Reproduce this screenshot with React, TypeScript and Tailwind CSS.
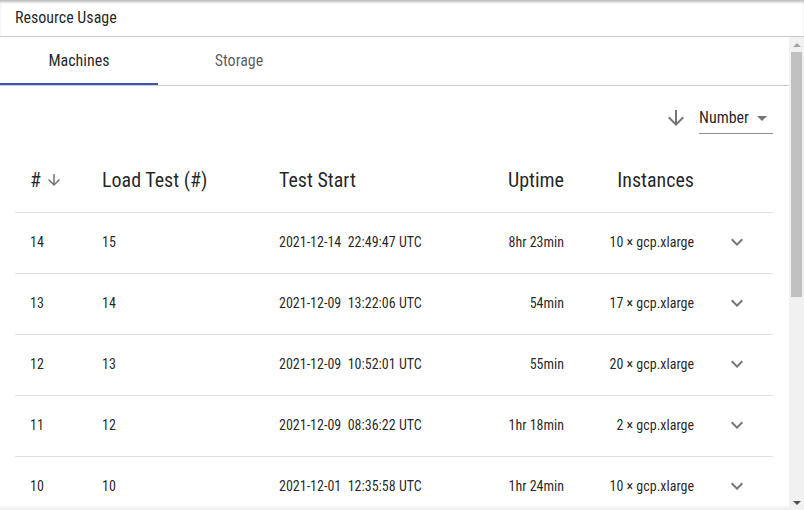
const rows = [
  { n: "14", lt: "15", d: "2021-12-14", t: "22:49:47", up: "8hr 23min", inst: "10 × gcp.xlarge" },
  { n: "13", lt: "14", d: "2021-12-09", t: "13:22:06", up: "54min", inst: "17 × gcp.xlarge" },
  { n: "12", lt: "13", d: "2021-12-09", t: "10:52:01", up: "55min", inst: "20 × gcp.xlarge" },
  { n: "11", lt: "12", d: "2021-12-09", t: "08:36:22", up: "1hr 18min", inst: "2 × gcp.xlarge" },
  { n: "10", lt: "10", d: "2021-12-01", t: "12:35:58", up: "1hr 24min", inst: "10 × gcp.xlarge" },
];

function ArrowDown({ className }: { className?: string }) {
  return (
    <svg viewBox="0 0 24 24" className={className} fill="currentColor">
      <path d="M20 12l-1.41-1.41L13 16.17V4h-2v12.17l-5.58-5.59L4 12l8 8 8-8z" />
    </svg>
  );
}

function ExpandMore({ className }: { className?: string }) {
  return (
    <svg viewBox="0 0 24 24" className={className} fill="currentColor">
      <path d="M16.59 8.59L12 13.17 7.41 8.59 6 10l6 6 6-6z" />
    </svg>
  );
}

function DropDown({ className }: { className?: string }) {
  return (
    <svg viewBox="0 0 24 24" className={className} fill="currentColor">
      <path d="M7 10l5 5 5-5z" />
    </svg>
  );
}

const grid = "grid grid-cols-[72px_177px_200px_115px_130px_64px]";

export default function App() {
  return (
    <div
      className="w-[804px] h-[510px] overflow-hidden bg-white text-[rgba(0,0,0,0.87)] flex flex-col"
      style={{ fontFamily: "'Roboto Condensed', Roboto, 'Liberation Sans', sans-serif" }}
    >
      <div className="h-[37px] shrink-0 border-b border-[#cccccc] flex items-center px-[15px] text-[16px] leading-none pb-[1px] shadow-[inset_0_3px_3px_-1px_rgba(0,0,0,0.28)]">
        Resource Usage
      </div>
      <div className="flex flex-1 min-h-0">
        <div className="w-[789px] flex flex-col relative">
          <div className="h-[49px] shrink-0 border-b border-[#d0d0d0] flex">
            <div className="w-[158px] relative flex items-center justify-center text-[16px] text-[rgba(0,0,0,0.87)]">
              Machines
              <div className="absolute left-0 right-0 bottom-0 h-[2px] bg-[#3f51b5]" />
            </div>
            <div className="w-[158px] flex items-center justify-center text-[16px] text-[rgba(0,0,0,0.66)] pl-[4px]">
              Storage
            </div>
          </div>
          <div className="flex justify-end items-center mt-[15px] pr-[16px] h-[33px]">
            <ArrowDown className="w-[24px] h-[24px] text-[#757575] mr-[11px]" />
            <div className="w-[74px] h-[33px] border-b border-[#8f8f8f] flex items-center justify-between text-[16px] pt-[2px]">
              <span>Number</span>
              <DropDown className="w-[24px] h-[24px] text-[#757575] -mr-[1px]" />
            </div>
          </div>
          <div className="mt-[14px] mx-[15px] w-[758px]">
            <div className={`${grid} h-[65px] border-b border-[#e0e0e0] items-center text-[20px]`}>
              <div className="pl-[15px] flex items-center">
                #
                <ArrowDown className="w-[18px] h-[18px] text-[#757575] ml-[4px]" />
              </div>
              <div className="pl-[15px]">Load Test (#)</div>
              <div className="pl-[15px]">Test Start</div>
              <div className="pr-[15px] text-right">Uptime</div>
              <div className="pr-[15px] text-right">Instances</div>
              <div />
            </div>
            {rows.map((r) => (
              <div key={r.n} className={`${grid} h-[61px] border-b border-[#e0e0e0] items-center text-[14px] pb-[2px]`}>
                <div className="pl-[15px]">{r.n}</div>
                <div className="pl-[15px]">{r.lt}</div>
                <div className="pl-[15px] whitespace-pre">{`${r.d}  ${r.t} UTC`}</div>
                <div className="pr-[15px] text-right">{r.up}</div>
                <div className="pr-[15px] text-right">{r.inst}</div>
                <div className="pl-[16px] flex items-center">
                  <ExpandMore className="w-[24px] h-[24px] text-[#757575]" />
                </div>
              </div>
            ))}
          </div>
          <div className="absolute left-0 right-0 bottom-0 h-[5px] bg-gradient-to-b from-transparent to-[rgba(0,0,0,0.08)]" />
        </div>
        <div className="w-[15px] bg-[#f1f1f1] flex flex-col items-center">
          <div className="h-[15px] flex items-center justify-center">
            <div className="w-0 h-0 border-l-[4px] border-r-[4px] border-b-[4px] border-l-transparent border-r-transparent border-b-[#a3a3a3]" />
          </div>
          <div className="w-[11px] h-[245px] bg-[#c1c1c1]" />
          <div className="flex-1" />
          <div className="h-[15px] flex items-center justify-center">
            <div className="w-0 h-0 border-l-[4px] border-r-[4px] border-t-[4px] border-l-transparent border-r-transparent border-t-[#505050]" />
          </div>
        </div>
      </div>
    </div>
  );
}
